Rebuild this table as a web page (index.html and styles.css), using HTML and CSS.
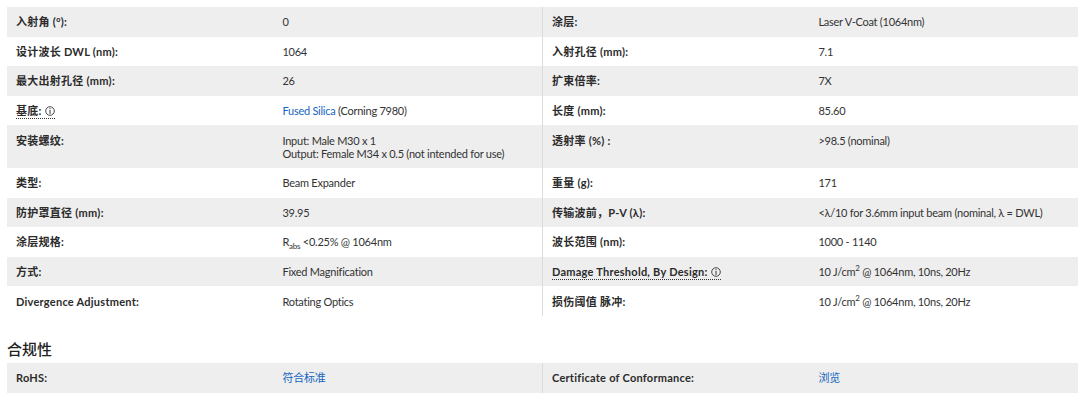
FILE: index.html
```html
<!DOCTYPE html>
<html lang="zh">
<head>
<meta charset="utf-8">
<title>Specs</title>
<link rel="stylesheet" href="styles.css">
</head>
<body>
<table class="spec">
  <tbody>
    <tr><td class="lbl">入射角 (°):</td><td class="val">0</td><td class="lbl sep">涂层:</td><td class="val">Laser V-Coat (1064nm)</td></tr>
    <tr><td class="lbl">设计波长 DWL (nm):</td><td class="val">1064</td><td class="lbl sep">入射孔径 (mm):</td><td class="val">7.1</td></tr>
    <tr><td class="lbl">最大出射孔径 (mm):</td><td class="val">26</td><td class="lbl sep">扩束倍率:</td><td class="val">7X</td></tr>
    <tr><td class="lbl"><span class="tip">基底: <svg class="info" viewBox="0 0 10 10" width="10" height="10"><circle cx="5" cy="5" r="4.3" fill="none" stroke="#333" stroke-width="0.9"/><rect x="4.5" y="2.1" width="1" height="1.1" fill="#333"/><rect x="4.5" y="4" width="1" height="3.9" fill="#333"/></svg></span></td><td class="val"><a href="#">Fused Silica</a> (Corning 7980)</td><td class="lbl sep">长度 (mm):</td><td class="val">85.60</td></tr>
    <tr><td class="lbl">安装螺纹:</td><td class="val">Input: Male M30 x 1<br>Output: Female M34 x 0.5 (not intended for use)</td><td class="lbl sep">透射率 (%) :</td><td class="val">&gt;98.5 (nominal)</td></tr>
    <tr><td class="lbl">类型:</td><td class="val">Beam Expander</td><td class="lbl sep">重量 (g):</td><td class="val">171</td></tr>
    <tr><td class="lbl">防护罩直径 (mm):</td><td class="val">39.95</td><td class="lbl sep">传输波前，P-V (λ):</td><td class="val">&lt;λ/10 for 3.6mm input beam (nominal, λ = DWL)</td></tr>
    <tr><td class="lbl">涂层规格:</td><td class="val">R<sub>abs</sub> &lt;0.25% @ 1064nm</td><td class="lbl sep">波长范围 (nm):</td><td class="val">1000 - 1140</td></tr>
    <tr><td class="lbl">方式:</td><td class="val">Fixed Magnification</td><td class="lbl sep"><span class="tip">Damage Threshold, By Design: <svg class="info" viewBox="0 0 10 10" width="10" height="10"><circle cx="5" cy="5" r="4.3" fill="none" stroke="#333" stroke-width="0.9"/><rect x="4.5" y="2.1" width="1" height="1.1" fill="#333"/><rect x="4.5" y="4" width="1" height="3.9" fill="#333"/></svg></span></td><td class="val">10 J/cm<sup>2</sup> @ 1064nm, 10ns, 20Hz</td></tr>
    <tr><td class="lbl">Divergence Adjustment:</td><td class="val">Rotating Optics</td><td class="lbl sep">损伤阈值 脉冲:</td><td class="val">10 J/cm<sup>2</sup> @ 1064nm, 10ns, 20Hz</td></tr>
  </tbody>
</table>

<h2 class="section">合规性</h2>

<table class="spec">
  <tbody>
    <tr><td class="lbl">RoHS:</td><td class="val"><a href="#">符合标准</a></td><td class="lbl sep">Certificate of Conformance:</td><td class="val"><a href="#">浏览</a></td></tr>
  </tbody>
</table>
</body>
</html>
```

FILE: styles.css
```css
body {
  margin: 7px;
  font-family: Lato, "Noto Sans CJK SC", sans-serif;
  font-size: 11px;
  color: #333;
  background: #fff;
}

.spec {
  width: 100%;
  border-collapse: collapse;
  table-layout: fixed;
}

.spec td {
  width: 25%;
  padding: 8.3px 9px;
  line-height: 13px;
  vertical-align: top;
}

.spec tr:nth-child(odd) td {
  background: #eeeeee;
}

.spec .lbl {
  font-weight: bold;
  color: #2b2b2b;
  letter-spacing: 0.25px;
}

.spec .val {
  color: #333;
  padding-left: 7px;
  letter-spacing: -0.25px;
}

.spec .sep {
  border-left: 1px solid #dcdcdc;
}

.spec a {
  color: #1565c0;
  text-decoration: none;
}

.spec sub,
.spec sup {
  font-size: 8px;
  line-height: 0;
}

.tip {
  border-bottom: 1px dotted #333;
  padding-bottom: 1px;
}

.info {
  vertical-align: -1px;
}

.section {
  margin: 22px 0 3px;
  font-size: 15px;
  line-height: 22px;
  font-weight: 500;
  color: #222;
}
```
